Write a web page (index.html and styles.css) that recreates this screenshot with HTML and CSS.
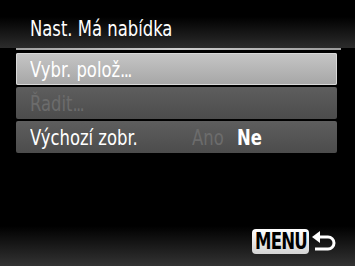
FILE: index.html
```html
<!DOCTYPE html>
<html lang="cs">
<head>
    <meta charset="UTF-8">
    <meta name="viewport" content="width=device-width, initial-scale=1.0">
    <title>Nast. Má nabídka</title>
    <link rel="stylesheet" href="styles.css">
</head>
<body>
    <div class="screen">
        <div class="header">
            <h1 class="title"><span class="txt">Nast. Má nabídka</span></h1>
        </div>
        <div class="rule"></div>
        <ul class="menu">
            <li class="item selected"><span class="txt">Vybr. polož<span class="dots">...</span></span></li>
            <li class="item disabled"><span class="txt">Řadit<span class="dots">...</span></span></li>
            <li class="item">
                <span class="label"><span class="txt">Výchozí zobr.</span></span>
                <span class="options">
                    <span class="txt off">Ano</span>
                    <span class="txt on">Ne</span>
                </span>
            </li>
        </ul>
        <div class="footer">
            <span class="menu-key"><span class="txt">MENU</span></span>
            <svg class="back" width="26" height="24" viewBox="0 0 26 24">
                <path d="M1 8 L9 2 L9 14 Z" fill="#fff"/>
                <path d="M7 8 H17 a6 6 0 0 1 0 12 H4" fill="none" stroke="#fff" stroke-width="3"/>
            </svg>
        </div>
    </div>
</body>
</html>
```

FILE: styles.css
```css
html, body {
    margin: 0;
    padding: 0;
    background: #000;
}
.screen {
    width: 355px;
    height: 266px;
    display: flex;
    flex-direction: column;
    background: #000;
    font-family: "DejaVu Sans Condensed", "Liberation Sans Narrow", "Liberation Sans", sans-serif;
    color: #fff;
    overflow: hidden;
}
.txt {
    display: inline-block;
    transform: scaleX(0.83);
    transform-origin: left center;
    white-space: nowrap;
}
.dots {
    letter-spacing: -2px;
}
.header {
    height: 48px;
    background: linear-gradient(#000 35%, #2c2c2c 100%);
}
.title {
    margin: 0;
    padding: 17px 0 0 30px;
    font-size: 22px;
    font-weight: normal;
    line-height: 24px;
}
.rule {
    margin: 0 14px 0 16px;
    height: 2px;
    background: linear-gradient(to right, #a0a0a0, #cfcfcf 50%, #9a9a9a);
}
.menu {
    list-style: none;
    margin: 3px 18px 0 16px;
    padding: 0;
    display: flex;
    flex-direction: column;
    gap: 2px;
}
.item {
    height: 32px;
    display: flex;
    align-items: center;
    padding-left: 14px;
    font-size: 22px;
    background: linear-gradient(#5e5e5e, #4c4c4c);
    border-radius: 2px;
}
.item.selected {
    background: linear-gradient(#c6c6c6, #a6a6a6);
    box-shadow: inset 0 0 0 1px #d8d8d8;
}
.item.disabled {
    color: #6c6c6c;
}
.label {
    width: 162px;
}
.options {
    display: flex;
}
.off {
    width: 45px;
    color: #6c6c6c;
}
.on {
    font-weight: bold;
}
.footer {
    margin-top: auto;
    height: 50px;
    display: flex;
    justify-content: flex-end;
    align-items: center;
    gap: 2px;
    padding: 0 18px 0 0;
    background: linear-gradient(#000 20%, #333 100%);
}
.menu-key {
    width: 57px;
    height: 25px;
    box-sizing: border-box;
    background: linear-gradient(#fff, #d4d4d4);
    color: #000;
    font-weight: bold;
    font-size: 23px;
    line-height: 25px;
    padding-left: 3px;
    border-radius: 4px;
    letter-spacing: -1px;
}
.menu-key .txt {
    transform: scaleX(0.8);
}
```
